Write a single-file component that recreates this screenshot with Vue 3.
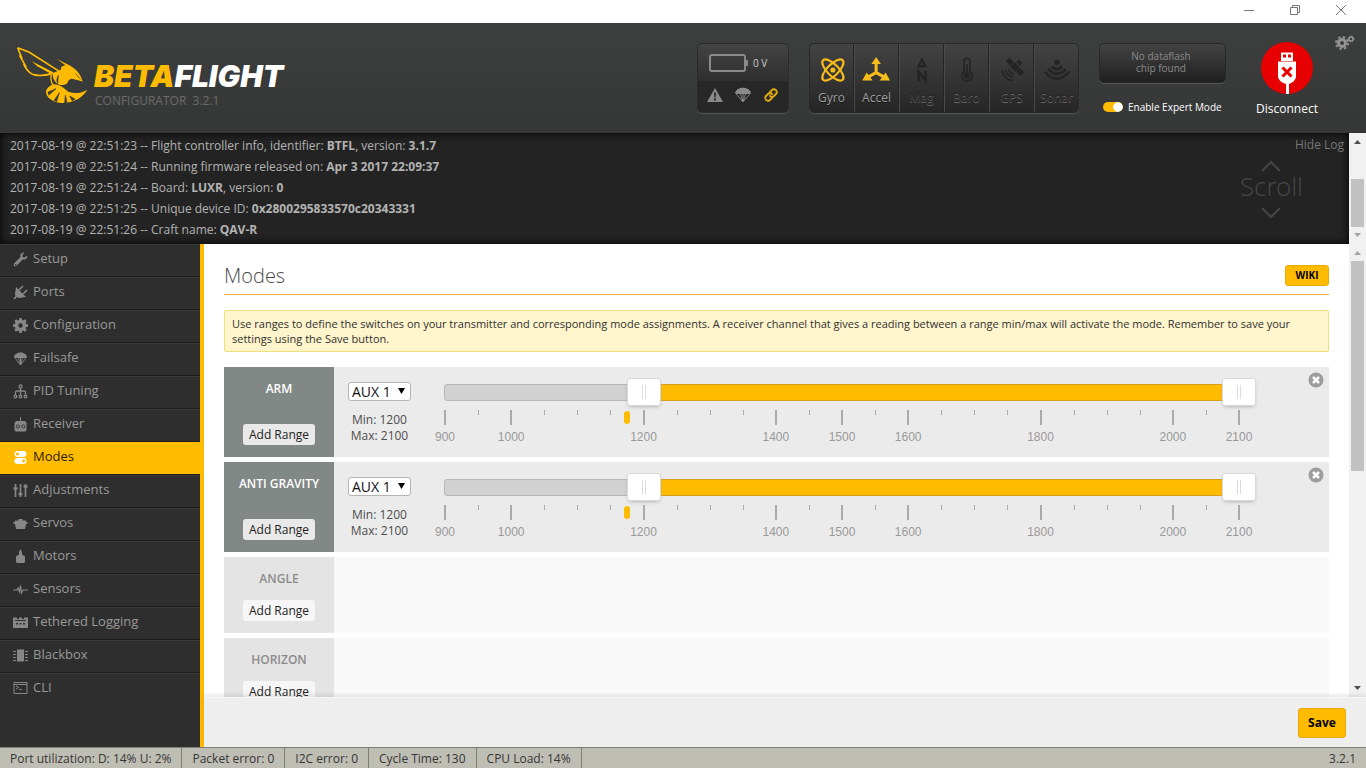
<script setup>
import { ref } from 'vue'

const sensors = [
  { name: 'Gyro', on: true },
  { name: 'Accel', on: true },
  { name: 'Mag', on: false },
  { name: 'Baro', on: false },
  { name: 'GPS', on: false },
  { name: 'Sonar', on: false },
]
const logLines = [
  { time: '2017-08-19 @ 22:51:23', parts: ['Flight controller info, identifier: ', 'BTFL', ', version: ', '3.1.7'] },
  { time: '2017-08-19 @ 22:51:24', parts: ['Running firmware released on: ', 'Apr 3 2017 22:09:37'] },
  { time: '2017-08-19 @ 22:51:24', parts: ['Board: ', 'LUXR', ', version: ', '0'] },
  { time: '2017-08-19 @ 22:51:25', parts: ['Unique device ID: ', '0x2800295833570c20343331'] },
  { time: '2017-08-19 @ 22:51:26', parts: ['Craft name: ', 'QAV-R'] },
]
const tabs = ['Setup', 'Ports', 'Configuration', 'Failsafe', 'PID Tuning', 'Receiver', 'Modes', 'Adjustments', 'Servos', 'Motors', 'Sensors', 'Tethered Logging', 'Blackbox', 'CLI']
const activeTab = 'Modes'
const modes = ref([
  { name: 'ARM', min: 1200, max: 2100, on: true },
  { name: 'ANTI GRAVITY', min: 1200, max: 2100, on: true },
  { name: 'ANGLE', on: false },
  { name: 'HORIZON', on: false },
])
const expert = ref(true)
const labelled = [900, 1000, 1200, 1400, 1500, 1600, 1800, 2000, 2100]
const pips = Array.from({ length: 25 }, (_, i) => 900 + i * 50).map((v) => ({ v, big: labelled.includes(v) }))
const pct = (v) => ((v - 900) / 12) + '%'
const status = ['Port utilization: D: 14% U: 2%', 'Packet error: 0', 'I2C error: 0', 'Cycle Time: 130', 'CPU Load: 14%']
const gearTeeth = [0, 45, 90, 135, 180, 225, 270, 315]
</script>

<template>
  <div class="window">
    <div class="titlebar">
      <button aria-label="Minimize"><svg width="12" height="12" viewBox="0 0 12 12"><path d="M1 6.500h10" /></svg></button>
      <button aria-label="Restore"><svg width="12" height="12" viewBox="0 0 12 12"><path d="M1.500 3.500h7v7h-7zM3.500 3.500v-2h7v7h-2" /></svg></button>
      <button aria-label="Close"><svg width="12" height="12" viewBox="0 0 12 12"><path d="M1 1l10 10M11 1L1 11" /></svg></button>
    </div>

    <header class="header">
      <div class="logo">
        <svg class="bee" width="75" height="60" viewBox="45 75 225 180">
          <path d="M53 83L64 111L61 110L76 137L73 136C80 150 90 160 101 164C118 169 138 166 158 160M53 83L88 97L178 154" fill="none" stroke="#ffbb00" stroke-width="5" stroke-linejoin="miter" />
          <path d="M95 124L160 157L155 163L112 139Z" fill="#ffbb00" />
          <path d="M158 159L182 150L184 140L196 136L171 117L202 133C226 144 242 161 248 185C238 181 225 177 214 176C207 178 203 184 202 190C196 195 188 196 179 195C167 190 160 181 158 166Z" fill="#ffbb00" />
          <path d="M153 164C152 176 153 190 161 196" fill="none" stroke="#ffbb00" stroke-width="4" />
          <path d="M163 193C151 195 141 203 138 214C137 232 158 247 183 249C222 250 248 232 262 209C244 220 225 222 207 216C196 211 188 195 163 193Z" fill="#ffbb00" />
          <path d="M176 165C171 172 168 184 174 191M226 160L242 178M143 217L168 206L146 226M162 242L178 218L170 245M194 249L196 226L201 248M217 243L209 228L226 238" fill="#383938" stroke="#383938" stroke-width="2" />
        </svg>
        <div class="brand">
          <div class="brand-name"><span>BETA</span>FLIGHT</div>
          <div class="brand-sub">CONFIGURATOR&nbsp; 3.2.1</div>
        </div>
      </div>

      <div class="battery">
        <div class="battery-top">
          <svg width="40" height="18" viewBox="0 0 40 18"><rect x="1" y="1" width="35" height="16" rx="2" fill="none" stroke="#8a8a8a" stroke-width="2" /><path d="M37 6h2v6h-2z" fill="#8a8a8a" /></svg>
          <span>0 V</span>
        </div>
        <div class="battery-bottom">
          <svg width="16" height="16" viewBox="0 0 16 16"><path fill-rule="evenodd" d="M8 1L16 15H0zM7 5.500L7.400 10.500H8.600L9 5.500zM7 11.500V13.500H9V11.500z" fill="#8a8a8a" /></svg>
          <svg width="16" height="16" viewBox="0 0 16 16"><path d="M0 6C2-1 14-1 16 6L8.500 15h-1zM1.500 7L7 13L5 7zM6 7L7.500 12.500V7zM8.500 7V12.500L10 7zM11 7L9 13L14.500 7z" fill="#8a8a8a" fill-rule="evenodd" /></svg>
          <svg width="16" height="16" viewBox="0 0 16 16"><g fill="none" stroke="#e0a90c" stroke-width="2" stroke-linecap="round"><path d="M7 5l2.500-2.500a3 3 0 0 1 4 4L11 9a3 3 0 0 1-4 0" /><path d="M9 11l-2.500 2.500a3 3 0 0 1-4-4L5 7a3 3 0 0 1 4 0" /></g></svg>
        </div>
      </div>

      <div class="sensors">
        <div v-for="s in sensors" :key="s.name" class="sensor" :class="{ on: s.on }">
          <svg width="30" height="30" viewBox="0 0 30 30">
            <template v-if="s.name === 'Gyro'">
              <g fill="none" stroke="currentColor" stroke-width="2.500"><ellipse cx="16" cy="15" rx="16" ry="6.500" transform="rotate(45 16 15)" /><ellipse cx="16" cy="15" rx="16" ry="6.500" transform="rotate(-45 16 15)" /></g>
              <circle cx="16" cy="15" r="3" fill="currentColor" />
            </template>
            <template v-else-if="s.name === 'Accel'">
              <path d="M14 6V18L5 23M14 18L23 23" fill="none" stroke="currentColor" stroke-width="3.500" />
              <path d="M14 0L19.500 8H8.500zM-2 27L3 18L10 27zM30 27L25 18L18 27z" fill="currentColor" />
            </template>
            <template v-else-if="s.name === 'Mag'">
              <path fill-rule="evenodd" d="M15 0L21 12H9zM15 6L13 9.500H17z" fill="currentColor" /><path d="M11 28V17L19 27V16" fill="none" stroke="currentColor" stroke-width="3" />
            </template>
            <template v-else-if="s.name === 'Baro'">
              <path d="M11.500 17V5a3.500 3.500 0 0 1 7 0V17a6 6 0 1 1-7 0z" fill="none" stroke="currentColor" stroke-width="2" /><circle cx="15" cy="21.500" r="3.500" fill="currentColor" /><path d="M15 8V20" stroke="currentColor" stroke-width="2" />
            </template>
            <template v-else-if="s.name === 'GPS'">
              <g fill="currentColor"><path d="M8 5L12 1L17 6L13 10zM20 17L24 13L29 18L25 22zM13 11L18 6L24 12L19 17zM20 6l3-3 4 4-3 3z" /></g>
              <path d="M12 14a4 4 0 0 0 5 5M8 15a8 8 0 0 0 8 8M4 15a12 12 0 0 0 12 12" fill="none" stroke="currentColor" stroke-width="2" />
            </template>
            <template v-else>
              <circle cx="15" cy="6" r="3" fill="currentColor" />
              <path d="M9 11Q15 17 21 11M5 14Q15 25 25 14M1 17Q15 33 29 17" fill="none" stroke="currentColor" stroke-width="3" />
            </template>
          </svg>
          <span>{{ s.name }}</span>
        </div>
      </div>

      <div class="flash">
        <div class="flash-box">No dataflash<br>chip found</div>
        <label class="expert"><input v-model="expert" type="checkbox">Enable Expert Mode</label>
      </div>

      <button class="connect">
        <svg width="54" height="54" viewBox="0 0 54 54">
          <circle cx="27" cy="27" r="26" fill="#e60000" />
          <path d="M21 20V11.500H33V20zM23 13.500V16.500H26V13.500zM28 13.500V16.500H31V13.500z" fill="#fff" fill-rule="evenodd" />
          <path d="M18 20.500H36V36Q35 41 29 43V53H26V43Q19 41 18 36z" fill="#fff" />
          <path d="M22.500 26.500L31.500 35.500M31.500 26.500L22.500 35.500" stroke="#e60000" stroke-width="3" />
        </svg>
        <span>Disconnect</span>
      </button>

      <button class="options" aria-label="Options">
        <svg width="20" height="16" viewBox="0 0 20 16">
          <g fill="none" stroke="#949494"><circle cx="7" cy="8" r="3.500" stroke-width="3" /><circle cx="7" cy="8" r="6" stroke-width="2" stroke-dasharray="2.400 2.312" /><circle cx="16" cy="4" r="2" stroke-width="1.500" /><circle cx="16" cy="4" r="3" stroke-width="1" stroke-dasharray="1.300 1.056" /></g>
        </svg>
      </button>
    </header>

    <section class="log">
      <div class="log-body">
        <p v-for="(l, i) in logLines" :key="i">{{ l.time }} -- <template v-for="(p, j) in l.parts" :key="j"><strong v-if="j % 2">{{ p }}</strong><template v-else>{{ p }}</template></template></p>
        <div class="log-side">
          <a href="#">Hide Log</a>
          <div class="scroll-hint">
            <svg width="20" height="11" viewBox="0 0 20 11"><path d="M1 10L10 1L19 10" /></svg>
            <span>Scroll</span>
            <svg width="20" height="11" viewBox="0 0 20 11"><path d="M1 1L10 10L19 1" /></svg>
          </div>
        </div>
      </div>
      <div class="scrollbar">
        <svg width="17" height="17" viewBox="0 0 17 17"><path d="M5 11L8.500 7L12 11z" fill="#505050" /></svg>
        <div class="rail"><div class="grip grip-log"></div></div>
        <svg width="17" height="17" viewBox="0 0 17 17"><path d="M5 6L8.500 10L12 6z" fill="#a3a3a3" /></svg>
      </div>
    </section>

    <div class="main">
      <nav class="tabs">
        <a v-for="t in tabs" :key="t" href="#" :class="{ active: t === activeTab }">
          <svg width="15" height="15" viewBox="0 0 15 15">
            <path v-if="t === 'Setup'" d="M14 3.500L11.500 5.500L9.500 5L9.500 3L11.500 .500C8.500 0 6.500 2.500 7.500 5L1 11.500C0 13.500 1.500 15 3.500 14L9.500 7.500C12.500 8 15 6.500 14 3.500zM2.500 12a.8 .8 0 1 1 0 1.500a.8 .8 0 0 1 0-1.500z" fill="currentColor" />
            <g v-else-if="t === 'Ports'"><path d="M3 2L13 12L9 12.500Q6 13.500 4 12L1.500 14.500L.500 13.500L2.500 11Q1.500 9 2.500 6z" fill="currentColor" /><path d="M6 5L10 1M10 9L14 5" stroke="currentColor" stroke-width="1.700" /></g>
            <g v-else-if="t === 'Configuration'"><circle cx="7.500" cy="7.500" r="4" fill="none" stroke="currentColor" stroke-width="3.500" /><path v-for="a in gearTeeth" :key="a" d="M5.800 3L6.300 0H8.700L9.200 3z" fill="currentColor" :transform="`rotate(${a} 7.5 7.5)`" /></g>
            <path v-else-if="t === 'Failsafe'" fill-rule="evenodd" d="M1 6C2 0 13 0 14 6L8 14H7zM2.500 7L6.500 12L5 7zM6 7L7 11.500V7zM8 7V11.500L9 7zM10 7L8.500 12L12.500 7z" fill="currentColor" />
            <g v-else-if="t === 'PID Tuning'" fill="none" stroke="currentColor" stroke-width="1.300"><circle cx="7.500" cy="2.500" r="1.500" /><path d="M7.500 4V11M2.500 11V8.500Q2.500 7 4 7H11Q12.500 7 12.500 8.500V11" /><circle cx="2.500" cy="12.500" r="1.300" /><circle cx="7.500" cy="12.500" r="1.300" /><circle cx="12.500" cy="12.500" r="1.300" /></g>
            <g v-else-if="t === 'Receiver'"><path fill-rule="evenodd" d="M7 0H8V4H12L13.500 6V13L12.500 14.500H2.500L1.500 13V6L3 4H7zM4.800 7.500a2 2 0 1 0 .1 0zM10.200 7.500a2 2 0 1 0 .1 0z" fill="currentColor" /><circle cx="4.800" cy="9.500" r="1.200" fill="currentColor" /><circle cx="10.200" cy="9.500" r="1.200" fill="currentColor" /></g>
            <path v-else-if="t === 'Modes'" fill-rule="evenodd" d="M4.500 1H10.500a3 3 0 0 1 0 6H4.500a3 3 0 0 1 0-6zM4.500 2.500a1.500 1.500 0 1 0 .1 0zM4.500 8H10.500a3 3 0 0 1 0 6H4.500a3 3 0 0 1 0-6zM10.500 9.500a1.500 1.500 0 1 0 .1 0z" fill="currentColor" />
            <g v-else-if="t === 'Adjustments'" fill="none" stroke="currentColor" stroke-width="1.700"><path d="M2.500 1V14M7.500 1V14M12.500 1V14" /><path d="M.500 5.500H4.500M5.500 11H9.500M10.500 3.500H14.500" stroke-width="2.500" /></g>
            <path v-else-if="t === 'Servos'" d="M5.500 3H9.500V4.500H13V6H15L14 8H13L12 13H3L2 8H1L0 6H2V4.500H5.500z" fill="currentColor" />
            <path v-else-if="t === 'Motors'" d="M7.500 0L9 3V5.500L12 7.500V13L11 14H4L3 13V7.500L6 5.500V3z" fill="currentColor" />
            <path v-else-if="t === 'Sensors'" d="M0 8H4L5 6L6.500 10L7.500 3.500L8.500 11L10 8H15" fill="none" stroke="currentColor" stroke-width="1.200" />
            <path v-else-if="t === 'Tethered Logging'" fill-rule="evenodd" d="M0 2.500H4V4H6V2.500H9V4H11V2.500H15V13H0zM2 5V6H13V5zM3 8V9.500H5V8zM6.500 8V9.500H8.500V8zM10 8V9.500H12V8z" fill="currentColor" />
            <g v-else-if="t === 'Blackbox'"><path d="M4 1.500H11V13.500H4z" fill="currentColor" /><path d="M0 3.500H3M0 6.500H3M0 9.500H3M0 12.500H3M12 3.500H15M12 6.500H15M12 9.500H15M12 12.500H15" stroke="currentColor" stroke-width="1" /></g>
            <g v-else fill="none" stroke="currentColor"><path d="M1 2.500H14V13.500H1zM1 4.500H14M3 6L5.500 7.500L3 9M6 9.500H9" /></g>
          </svg>
          <span>{{ t }}</span>
        </a>
      </nav>

      <main class="content">
        <div class="scroll-area">
          <div class="page">
            <div class="page-head">
              <h1>Modes</h1>
              <button class="wiki">WIKI</button>
            </div>
            <div class="note">Use ranges to define the switches on your transmitter and corresponding mode assignments. A receiver channel that gives a reading between a range min/max will activate the mode. Remember to save your settings using the Save button.</div>
            <div v-for="m in modes" :key="m.name" class="mode" :class="{ on: m.on }">
              <div class="mode-info">
                <h2>{{ m.name }}</h2>
                <button>Add Range</button>
              </div>
              <div v-if="m.on" class="range">
                <div class="channel">
                  <div class="select-wrap">
                    <select :aria-label="m.name + ' channel'"><option>AUX 1</option></select>
                    <svg width="7" height="8" viewBox="0 0 7 8"><path d="M0 1H7L3.500 7z" /></svg>
                  </div>
                  <div class="limits">Min: {{ m.min }}<br>Max: {{ m.max }}</div>
                </div>
                <div class="slider">
                  <div class="track"><div class="fill" :style="{ left: pct(m.min), width: (m.max - m.min) / 12 + '%' }"></div></div>
                  <input v-model.number="m.min" type="range" min="900" max="2100" :aria-label="m.name + ' minimum'">
                  <input v-model.number="m.max" type="range" min="900" max="2100" :aria-label="m.name + ' maximum'">
                  <div class="marker" :style="{ left: pct(1175) }"></div>
                  <div v-for="p in pips" :key="p.v" class="pip" :class="{ big: p.big }" :style="{ left: pct(p.v) }"><span v-if="p.big">{{ p.v }}</span></div>
                </div>
                <button class="delete" aria-label="Delete range">
                  <svg width="16" height="16" viewBox="0 0 16 16"><circle cx="8" cy="8" r="7.500" fill="#9c9c9c" /><path d="M5 5L11 11M11 5L5 11" stroke="#fff" stroke-width="2.500" /></svg>
                </button>
              </div>
            </div>
          </div>
          <div class="scrollbar">
            <svg width="17" height="17" viewBox="0 0 17 17"><path d="M5 11L8.500 7L12 11z" fill="#a3a3a3" /></svg>
            <div class="rail"><div class="grip grip-page"></div></div>
            <svg width="17" height="17" viewBox="0 0 17 17"><path d="M5 6L8.500 10L12 6z" fill="#505050" /></svg>
          </div>
        </div>
        <div class="toolbar"><button>Save</button></div>
      </main>
    </div>

    <footer class="status">
      <span v-for="s in status" :key="s">{{ s }}</span>
      <b>3.2.1</b>
    </footer>
  </div>
</template>

<style>
body { margin: 0; }
</style>

<style scoped>
* { box-sizing: border-box; }
button { padding: 0; border: 0; background: none; font: inherit; color: inherit; cursor: pointer; }
svg { display: block; flex: none; overflow: visible; }
a { text-decoration: none; }
.window { height: 100vh; display: flex; flex-direction: column; overflow: hidden; font-family: "Open Sans", sans-serif; font-size: 12px; color: #303030; background: #fff; }

.titlebar { height: 23px; flex: none; display: flex; justify-content: flex-end; align-items: flex-start; gap: 34px; padding: 4px 19px 0 0; background: #fff; }
.titlebar path { fill: none; stroke: #777; stroke-width: 1; }

.header { height: 110px; flex: none; display: flex; align-items: flex-start; padding: 18px 11px 0 15px; background: linear-gradient(#3d3f3e, #353736); }
.logo { display: flex; margin: 4px auto 0 0; }
.brand { padding: 15px 0 0 4px; }
.brand-name { font-family: Inter, sans-serif; font-weight: 900; font-style: italic; font-size: 30px; line-height: 32px; color: #fff; }
.brand-name span { color: #ffbb00; }
.brand-sub { padding-left: 1px; font-size: 12px; line-height: 17px; color: #6b6b6b; }

.battery { width: 92px; height: 70px; margin: 2px 20px 0 0; border: 1px solid #2a2a2a; border-radius: 5px; box-shadow: 0 1px 1px #575858; overflow: hidden; background: linear-gradient(#434343, #2d2d2d 60%); }
.battery-top { height: 37px; display: flex; align-items: center; gap: 4px; padding: 1px 0 0 11px; font-size: 10px; color: #ccc; }
.battery-bottom { height: 32px; display: flex; align-items: center; justify-content: space-between; padding: 0 9px 4px 9px; background: #272727; }

.sensors { display: flex; height: 70px; margin: 2px 20px 0 0; border: 1px solid #272727; border-radius: 5px; box-shadow: 0 1px 1px #575858; background: linear-gradient(#434343, #262626); }
.sensor { width: 45px; display: flex; flex-direction: column; align-items: center; padding-top: 13px; border-left: 1px solid #4b4b4b; border-right: 1px solid #242424; font-size: 12px; line-height: 16px; color: #242424; text-shadow: 0 1px 0 #6a6a6a; }
.sensor:first-child { width: 44px; border-left: 0; }
.sensor:last-child { width: 44px; border-right: 0; }
.sensor svg { width: 26px; height: 26px; margin-bottom: 7px; }
.sensor.on { color: #a0a0a0; text-shadow: 0 1px 0 #111; }
.sensor.on svg { color: #f7bb1c; }

.flash { width: 127px; margin: 2px 21px 0 0; }
.flash-box { height: 40px; padding: 6px 3px 0 0; border: 1px solid #272727; border-radius: 5px; box-shadow: 0 1px 1px #575858; background: linear-gradient(#434343, #202020); font-size: 10px; line-height: 12px; text-align: center; color: #8b8b8b; }
.expert { display: flex; align-items: center; gap: 5px; margin: 17px 0 0 4px; font-size: 10px; line-height: 14px; color: #fff; white-space: nowrap; }
.expert input { appearance: none; width: 20px; height: 10px; flex: none; margin: 0; border-radius: 5px; background: radial-gradient(circle 5px at 15px 5px, #fff 90%, transparent) #ffbb00; }

.connect { width: 80px; display: flex; flex-direction: column; align-items: center; gap: 5px; margin-right: 8px; font-size: 12px; color: #fff; }
.connect span { line-height: 18px; }
.options { margin-top: -6px; }

.log { flex: none; display: flex; height: 111px; background: #232323; }
.log-body { flex: 1; position: relative; padding: 2px 0 0 10px; box-shadow: inset 0 0 8px #000; overflow: hidden; }
.log p { margin: 0; font-size: 12px; line-height: 21px; color: #b3b3b3; white-space: nowrap; }
.log-side { position: absolute; top: 2px; right: 5px; display: flex; flex-direction: column; align-items: flex-end; }
.log-side a { font-size: 12px; line-height: 20px; color: #757575; }
.scroll-hint { display: flex; flex-direction: column; align-items: center; margin: 6px 41px 0 0; font-family: "Open Sans Light", "Open Sans", sans-serif; font-size: 26px; line-height: 36px; color: #474747; }
.scroll-hint span { margin: -4px 0 3px; }
.scroll-hint path { fill: none; stroke: #464646; stroke-width: 2; }

.scrollbar { width: 17px; flex: none; display: flex; flex-direction: column; background: #f1f1f1; }
.rail { flex: 1; }
.grip { margin: 0 2px; background: #c1c1c1; position: relative; }
.grip-log { height: 62%; top: 38%; }
.grip-page { height: 50%; }

.main { flex: 1; min-height: 0; display: flex; }
.tabs { width: 204px; flex: none; border-right: 4px solid #ffbb00; background: #2e2e2e; overflow: hidden; }
.tabs a { display: flex; align-items: center; gap: 5px; height: 33px; padding: 0 0 3px 13px; border-top: 1px solid #3a3a3a; border-bottom: 1px solid #1b1b1b; font-size: 13px; line-height: 17px; color: #999; }
.tabs a span { padding-bottom: 1px; }
.tabs a svg { color: #878787; }
.tabs a.active { border-color: #ffbb00 #ffbb00 #1b1b1b; background: #ffbb00; color: #2b2000; }
.tabs a.active svg { color: #fff; }
.tabs a:last-child { height: 31px; border-bottom: 0; }

.content { flex: 1; min-width: 0; display: flex; flex-direction: column; }
.scroll-area { flex: 1; min-height: 0; display: flex; }
.page { flex: 1; min-width: 0; padding: 20px; overflow: hidden; }
.page-head { display: flex; justify-content: space-between; align-items: flex-start; height: 31px; margin-bottom: 15px; border-bottom: 1px solid #e9b13a; }
h1 { margin: 0; font-family: "Open Sans Light", "Open Sans", sans-serif; font-size: 20px; line-height: 24px; font-weight: 300; color: #4a4a4a; }
.wiki { width: 44px; height: 21px; margin-top: 1px; border-radius: 3px; border: 1px solid #e8ab08; background: #ffbb00; font-size: 10px; font-weight: 700; line-height: 17px; color: #000; }
.note { padding: 5px 7px; margin-bottom: 15px; border: 1px solid #f0e07a; border-radius: 2px; background: #fff5cd; font-size: 11px; line-height: 15px; color: #303030; }

.mode { display: flex; min-height: 76px; margin-bottom: 5px; background: #f9f9f9; }
.mode.on { min-height: 90px; background: #ebebeb; }
.mode-info { width: 110px; flex: none; display: flex; flex-direction: column; justify-content: space-between; align-items: center; padding: 12px 0; background: #e4e4e4; color: #8b8b8b; }
.mode.on .mode-info { background: #828885; color: #fff; }
h2 { margin: 0; font-size: 12px; line-height: 20px; font-weight: 600; }
.mode-info button { width: 72px; height: 21px; border-radius: 3px; background: #f6f6f6; font-size: 12px; line-height: 19px; color: #222; }
.mode.on .mode-info button { background: #e9e9e9; }
.range { flex: 1; position: relative; display: flex; }
.channel { width: 90px; padding: 15px 0 0 14px; }
.select-wrap { position: relative; width: 63px; }
.select-wrap select { display: block; width: 63px; height: 19px; padding: 0 3px; appearance: none; border: 1px solid #b5b5b5; border-radius: 3px; background: #fff; font: 14px "Open Sans", sans-serif; line-height: 17px; color: #111; }
.select-wrap svg { position: absolute; right: 6px; top: 5px; pointer-events: none; }
.limits { width: 63px; margin-top: 11px; font-size: 12px; line-height: 16px; text-align: center; color: #4d4d4d; }
.slider { flex: 1; position: relative; margin: 17px 90px 0 21px; }
.track { position: relative; height: 17px; margin: 0 0 0 -1px; border: 1px solid #b7b7b7; border-radius: 3px; background: #d1d1d1; }
.fill { position: absolute; top: -1px; bottom: -1px; background: #ffbb00; border: 1px solid #d6a01c; }
.slider input { position: absolute; left: -17px; top: -6px; width: calc(100% + 34px); height: 28px; margin: 0; appearance: none; background: none; pointer-events: none; }
.slider input::-webkit-slider-thumb { appearance: none; width: 34px; height: 28px; border: 1px solid #d9d9d9; border-radius: 3px; box-shadow: 0 2px 4px -2px #999; pointer-events: auto; background: linear-gradient(90deg, #dcdcdc 1px, transparent 1px 3px, #dcdcdc 3px) center / 4px 14px no-repeat #fff; }
.marker { position: absolute; top: 27px; width: 6px; height: 13px; margin-left: -3px; border-radius: 3px; background: #ffbb00; }
.pip { position: absolute; top: 26px; width: 1px; height: 5px; background: #aaa; }
.pip.big { width: 2px; height: 15px; margin-left: -1px; }
.pip span { position: absolute; left: 1px; top: 20px; transform: translateX(-50%); font: 12px "Liberation Sans", Arial, sans-serif; line-height: 14px; color: #999; }
.delete { position: absolute; top: 5px; right: 5px; }

.toolbar { height: 50px; flex: none; display: flex; justify-content: flex-end; align-items: center; padding: 1px 20px 0; background: #eee; border-top: 1px solid #f8f8f8; box-shadow: 0 -2px 4px rgba(0, 0, 0, .1); z-index: 1; }
.toolbar button { width: 48px; height: 30px; border: 1px solid #e8a910; border-radius: 3px; background: #ffbb00; font-weight: 700; font-size: 12px; line-height: 26px; color: #000; }

.status { height: 21px; flex: none; display: flex; border-top: 1px solid #7f8074; background: #bfbeb4; font-size: 12px; line-height: 21px; color: #353535; }
.status span { padding: 0 10px; border-right: 1px solid #7f8074; white-space: nowrap; }
.status b { margin-left: auto; padding-right: 10px; font-weight: 400; }
</style>
